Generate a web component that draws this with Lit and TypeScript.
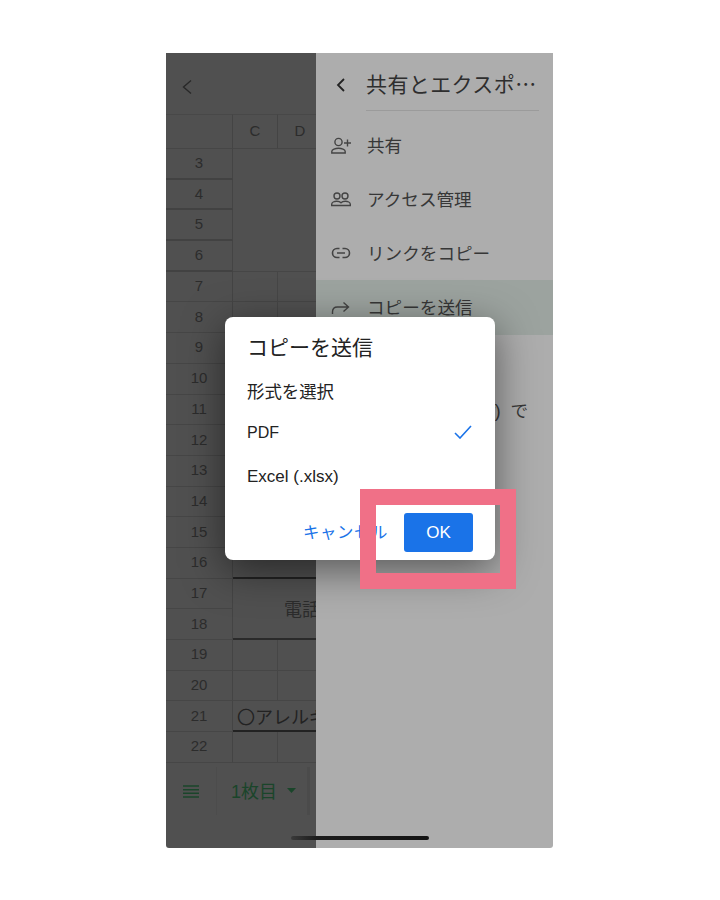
import { LitElement, html, css, svg } from "lit";
import { customElement } from "lit/decorators.js";

const icon = (body: unknown, w = 22, h = 22) =>
  html`<svg width=${w} height=${h} viewBox="0 0 22 22" fill="none" stroke="#444" stroke-width="1.4">${body}</svg>`;

const personAdd = svg`<circle cx="7.5" cy="8" r="3.6"/><path d="M.8 19v-1.5c0-2 3.6-3.3 6.7-3.3s6.7 1.3 6.7 3.3V19z"/><path d="M13 9h7M16.5 5.5v7"/>`;
const people = svg`<circle cx="6" cy="8" r="3"/><circle cx="14" cy="8" r="3"/><path d="M.7 17.5v-1.2c0-1.8 2.6-3 5-3 1.7 0 3.4.5 4.3 1.5.9-1 2.6-1.5 4.3-1.5 2.4 0 5 1.2 5 3v1.2z"/>`;
const link = svg`<path d="M8.5 6.5H6a4.5 4.5 0 0 0 0 9h2.5M11.5 6.5H14a4.5 4.5 0 0 1 0 9h-2.5M6 11h8" stroke-width="1.6"/>`;
const forward = svg`<path d="M1.5 17v-2c0-3 2-5 5-5H17.5M12.5 5.5l5 4.5-5 4.5"/>`;

const rowsAfter = [7, 8, 9, 10, 11, 12, 13, 14, 15];

@customElement("app-root")
export class AppRoot extends LitElement {
  static styles = css`
    :host {
      display: block;
      height: 900px;
      padding: 53px 0 0 166px;
      box-sizing: border-box;
      font-family: "Liberation Sans", "Noto Sans CJK JP", sans-serif;
    }
    .phone {
      position: relative;
      display: flex;
      width: 387px;
      height: 795px;
      overflow: hidden;
      border-radius: 0 0 3px 3px;
    }
    .sheet {
      width: 150px;
      flex: none;
      display: flex;
      flex-direction: column;
      background: #505050;
      color: #2c2c2c;
      overflow: hidden;
    }
    .top {
      height: 61px;
      flex: none;
      box-sizing: border-box;
      display: flex;
      align-items: center;
      padding: 6px 0 0 14px;
      color: #282828;
    }
    .gridwrap {
      flex: none;
      height: 649px;
      overflow: hidden;
    }
    .headrow {
      display: grid;
      grid-template-columns: 67px 45px 45px;
    }
    .hd {
      height: 35px;
      display: flex;
      align-items: center;
      justify-content: center;
      padding-bottom: 3px;
      border-top: 1px solid #484848;
      border-bottom: 1px solid #464646;
      border-right: 1px solid #444;
      box-sizing: border-box;
      font-size: 15px;
    }
    .grid {
      display: grid;
      grid-template-columns: 67px 45px 45px;
      grid-auto-rows: 30.7px;
      font-size: 15px;
    }
    .n, .c {
      display: flex;
      align-items: center;
      box-sizing: border-box;
      border-bottom: 1px solid #464646;
    }
    .n {
      justify-content: center;
      padding-bottom: 2px;
      border-right: 1px solid #444;
      font-size: 15px;
    }
    .n.strong { border-bottom: 2px solid #424242; }
    .c { border-right: 1px solid #464646; }
    .blank { grid-column: 2 / 4; grid-row: span 4; }
    .wide { grid-column: 2 / 4; border-bottom: 2px solid #222; }
    .phonecell {
      grid-column: 2 / 4;
      grid-row: span 2;
      border-bottom: 2px solid #2a2a2a;
      font-size: 18px;
      padding-left: 51px;
      white-space: nowrap;
      overflow: hidden;
    }
    .allergy {
      grid-column: 2 / 4;
      border-bottom: 2px solid #222;
      font-size: 18px;
      padding-left: 4px;
      white-space: nowrap;
      overflow: hidden;
      color: #222;
    }
    .tabs {
      flex: 1;
      display: flex;
      align-items: flex-start;
      padding-top: 4px;
      color: #1a452a;
    }
    .menu {
      width: 51px;
      height: 48px;
      flex: none;
      box-sizing: border-box;
      display: flex;
      align-items: center;
      justify-content: center;
      border-right: 1px solid #4c4c4c;
    }
    .tab {
      width: 93px;
      height: 48px;
      flex: none;
      display: flex;
      align-items: center;
      gap: 10px;
      padding: 0 0 2px 14px;
      box-sizing: border-box;
      border-right: 3px solid #4b4b4b;
      font-size: 18px;
    }
    .panel {
      flex: 1;
      background: #adadad;
      color: #373737;
      display: flex;
      flex-direction: column;
    }
    .ptop {
      height: 58px;
      flex: none;
      display: flex;
      align-items: center;
      gap: 15px;
      padding-left: 16px;
      margin-bottom: 7px;
    }
    .ptop svg { margin: 6px 1px 0 0; }
    .ptitle {
      flex: none;
      width: 173px;
      height: 58px;
      padding-top: 3px;
      display: flex;
      align-items: center;
      box-sizing: border-box;
      border-bottom: 1px solid #9b9b9b;
      font-family: "Noto Sans CJK JP", sans-serif;
      font-size: 21px;
      letter-spacing: 0.4px;
      white-space: nowrap;
      overflow: hidden;
      color: #2e2e2e;
    }
    .item {
      height: 54px;
      flex: none;
      display: flex;
      align-items: center;
      gap: 14px;
      padding-left: 15px;
      font-size: 17.6px;
      white-space: nowrap;
    }
    .item span { padding-bottom: 2px; }
    .item.on { background: #9ca39f; height: 55px; }
    .spacer { height: 48px; }
    .far { justify-content: flex-end; padding-right: 25px; }
    .dialog {
      position: absolute;
      left: 59px;
      top: 264px;
      width: 270px;
      height: 243px;
      box-sizing: border-box;
      padding: 15px 22px 0;
      background: #fff;
      border-radius: 8px;
      box-shadow: 0 10px 40px rgba(0, 0, 0, 0.5);
      color: #222;
      display: flex;
      flex-direction: column;
    }
    .dtitle { font-size: 21px; line-height: 32px; height: 43px; flex: none; }
    .dline {
      flex: none;
      display: flex;
      align-items: center;
      justify-content: space-between;
    }
    .l1 { height: 30px; font-size: 17.4px; }
    .l2 { height: 56px; font-size: 16px; }
    .l3 { height: 32px; font-size: 17px; }
    .l2 svg { margin: 0 1px 2px 0; }
    .actions {
      display: flex;
      justify-content: flex-end;
      align-items: center;
      gap: 16px;
      margin-top: 20px;
    }
    .cancel { color: #1a73e8; font-size: 16.4px; letter-spacing: 0.6px; padding-bottom: 4px; }
    .ok {
      width: 69px;
      height: 39px;
      display: flex;
      align-items: center;
      justify-content: center;
      background: #1a73e8;
      color: #fff;
      border-radius: 3px;
      font-size: 17px;
    }
    .mark {
      position: absolute;
      left: 194px;
      top: 436px;
      width: 156px;
      height: 100px;
      box-sizing: border-box;
      border: 16px solid #f07087;
    }
    .home {
      position: absolute;
      left: 125px;
      top: 783px;
      width: 138px;
      height: 4px;
      border-radius: 2px;
      background: linear-gradient(90deg, #3a3a3a 0, #1c1c1c 18%, #141414 100%);
    }
  `;

  render() {
    return html`<div class="phone">
      <div class="sheet">
        <div class="top">
          <svg width="16" height="18" viewBox="0 0 16 18" fill="none" stroke="currentColor" stroke-width="1.4"><path d="M11 2.5 3.5 9 11 15.5"/></svg>
        </div>
        <div class="gridwrap">
          <div class="headrow">
            <div class="hd"></div><div class="hd">C</div><div class="hd">D</div>
          </div>
          <div class="grid">
            <div class="n strong">3</div><div class="c blank"></div>
            <div class="n strong">4</div><div class="n strong">5</div><div class="n strong">6</div>
            ${rowsAfter.map((r) => html`<div class="n">${r}</div><div class="c"></div><div class="c"></div>`)}
            <div class="n">16</div><div class="c wide"></div>
            <div class="n">17</div><div class="c phonecell">電話番号</div>
            <div class="n">18</div>
            <div class="n">19</div><div class="c"></div><div class="c"></div>
            <div class="n">20</div><div class="c"></div><div class="c"></div>
            <div class="n">21</div><div class="c allergy">〇アレルギー</div>
            <div class="n">22</div><div class="c"></div><div class="c"></div>
          </div>
        </div>
        <div class="tabs">
          <div class="menu">
            <svg width="18" height="13" viewBox="0 0 18 13" fill="none" stroke="currentColor" stroke-width="1.5"><path d="M1 1h16M1 4.7h16M1 8.3h16M1 12h16"/></svg>
          </div>
          <div class="tab">
            <span>1枚目</span>
            <svg width="9" height="5" viewBox="0 0 9 5" fill="currentColor"><path d="M0 0h9L4.5 5z"/></svg>
          </div>
        </div>
      </div>
      <div class="panel">
        <div class="ptop">
          <svg width="18" height="18" viewBox="0 0 18 18" fill="none" stroke="#222" stroke-width="1.8"><path d="M12 3 6 9l6 6"/></svg>
          <div class="ptitle">共有とエクスポ…</div>
        </div>
        <div class="item">${icon(personAdd)}<span>共有</span></div>
        <div class="item">${icon(people)}<span>アクセス管理</span></div>
        <div class="item">${icon(link)}<span>リンクをコピー</span></div>
        <div class="item on">${icon(forward)}<span>コピーを送信</span></div>
        <div class="spacer"></div>
        <div class="item far"><span>(.pdf)&nbsp;&nbsp;で</span></div>
      </div>
      <div class="dialog">
        <div class="dtitle">コピーを送信</div>
        <div class="dline l1">形式を選択</div>
        <div class="dline l2">
          <span>PDF</span>
          <svg width="18" height="14" viewBox="0 0 18 14" fill="none" stroke="#1a73e8" stroke-width="1.6"><path d="M1 8l5 5L17 1"/></svg>
        </div>
        <div class="dline l3">Excel (.xlsx)</div>
        <div class="actions">
          <span class="cancel">キャンセル</span>
          <div class="ok">OK</div>
        </div>
      </div>
      <div class="mark"></div>
      <div class="home"></div>
    </div>`;
  }
}
